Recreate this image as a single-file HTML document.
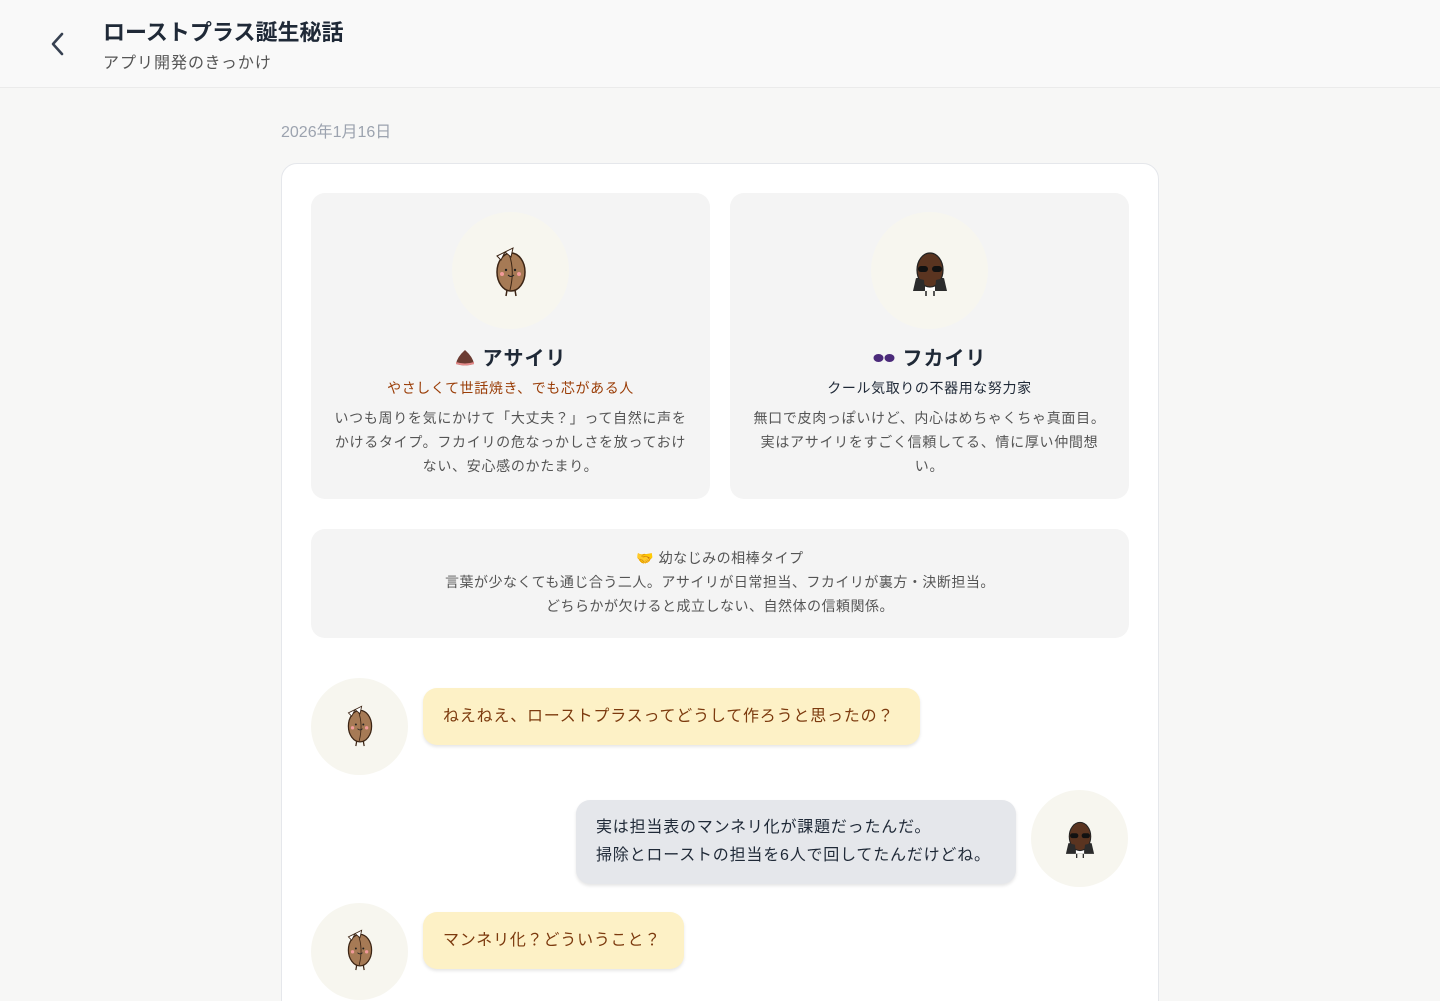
<!DOCTYPE html>
<html><head><meta charset="utf-8"><style>
*{box-sizing:border-box;margin:0;padding:0}
html,body{width:1440px;height:1001px;overflow:hidden}
body{background:#f7f7f6;font-family:"Liberation Sans","Noto Sans CJK JP",sans-serif;position:relative}
.hdr{position:absolute;left:0;top:0;width:1440px;height:88px;background:#f9f9f9;border-bottom:1px solid #ebebeb}
.back{position:absolute;left:48px;top:31px}
.t1{position:absolute;left:103px;top:15px;font-size:22px;font-weight:bold;color:#1f2937}
.t2{position:absolute;left:103px;top:49px;font-size:16px;color:#555;letter-spacing:1px}
.date{position:absolute;left:281px;top:118px;font-size:16px;color:#9ca3af}
.card{position:absolute;left:281px;top:163px;width:878px;height:860px;background:#fff;border:1px solid #e5e7eb;border-radius:16px}
.pc{position:absolute;top:193px;width:399px;height:306px;background:#f4f4f4;border-radius:14px;text-align:center}
.av{position:absolute;border-radius:50%;background:#f7f6ef}
.name{position:absolute;top:149px;left:0;width:100%;font-size:20px;font-weight:bold;color:#1f2937;letter-spacing:1px}
.sub{position:absolute;top:185px;left:0;width:100%;font-size:14px;letter-spacing:.6px}
.desc{position:absolute;top:213px;left:20px;right:20px;font-size:14px;line-height:24px;color:#555;letter-spacing:.7px}
.info{position:absolute;left:311px;top:529px;width:818px;height:109px;background:#f4f4f4;border-radius:14px;text-align:center;font-size:14px;color:#555;line-height:24px;padding-top:17px;letter-spacing:.5px}
.bub{position:absolute;border-radius:14px;font-size:16px;box-shadow:0 2px 3px rgba(0,0,0,.1);letter-spacing:.8px}
.y{background:#fdf1c6;color:#7c3a0e;padding:0 20px;line-height:57px;height:57px}
.g{background:#e5e7eb;color:#1f2937;padding:14px 20px;line-height:28px}
</style></head><body>
<div class="hdr">
<svg class="back" width="20" height="26" viewBox="0 0 20 26"><path d="M14 3 L5 13 L14 23" fill="none" stroke="#374151" stroke-width="2.6" stroke-linecap="round" stroke-linejoin="round"/></svg>
<div class="t1">ローストプラス誕生秘話</div>
<div class="t2">アプリ開発のきっかけ</div>
</div>
<div class="date">2026年1月16日</div>
<div class="card"></div>

<svg width="0" height="0" style="position:absolute"><defs>
<g id="asa"><ellipse cx="0" cy="2" rx="14" ry="19" fill="#a67a55" stroke="#3b2414" stroke-width="1.5"/><path d="M-2 -16 Q4 0 -1 20" fill="none" stroke="#3b2414" stroke-width="1"/><circle cx="-5" cy="0" r="1.2" fill="#222"/><circle cx="4" cy="0" r="1.2" fill="#222"/><path d="M-3 5 Q0 8 3 5" fill="none" stroke="#222" stroke-width="1"/><circle cx="-9" cy="4" r="2" fill="#f19a9a"/><circle cx="8" cy="4" r="2" fill="#f19a9a"/><path d="M-14 -14 L-6 -18 L-10 -10 Z M-6 -18 L2 -22 L0 -13 Z" fill="#fff" stroke="#3b2414" stroke-width="1"/><path d="M-4 20 L-5 26 M4 20 L5 26" stroke="#3b2414" stroke-width="1.5"/></g>
<g id="fuk"><path d="M-13 8 L-16 20 L16 20 L13 8 Z" fill="#2b2b2b"/><rect x="-5" y="10" width="10" height="10" fill="#fff"/><ellipse cx="0" cy="0" rx="13" ry="17" fill="#5a3420" stroke="#222" stroke-width="1.2"/><rect x="-12" y="-4" width="10" height="6" rx="3" fill="#111"/><rect x="2" y="-4" width="10" height="6" rx="3" fill="#111"/><path d="M-14 8 L-17 21 L-5 21 L-6 10 Z M14 8 L17 21 L5 21 L6 10Z" fill="#2b2b2b"/><path d="M-4 21 L-4 26 M4 21 L4 26" stroke="#222" stroke-width="1.5"/></g>
</defs></svg>

<div class="pc" style="left:311px">
<div class="av" style="left:141px;top:19px;width:117px;height:117px"></div>
<svg style="position:absolute;left:170px;top:45px" width="60" height="70" viewBox="-30 -32 60 70"><use href="#asa"/></svg>
<div class="name"><svg width="20" height="18" viewBox="0 0 20 18" style="vertical-align:-2px;margin-right:8px"><path d="M10 1 Q2 8 1 15 Q10 18 19 15 Q18 8 10 1Z" fill="#6b3b32"/><path d="M1 13 Q10 16 19 13 L19 15 Q10 18 1 15Z" fill="#e48a8a"/></svg>アサイリ</div>
<div class="sub" style="color:#9a3d07">やさしくて世話焼き、でも芯がある人</div>
<div class="desc">いつも周りを気にかけて「大丈夫？」って自然に声を<br>かけるタイプ。フカイリの危なっかしさを放っておけ<br>ない、安心感のかたまり。</div>
</div>
<div class="pc" style="left:730px">
<div class="av" style="left:141px;top:19px;width:117px;height:117px"></div>
<svg style="position:absolute;left:170px;top:45px" width="60" height="70" viewBox="-30 -32 60 70"><use href="#fuk"/></svg>
<div class="name"><svg width="22" height="10" viewBox="0 0 22 10" style="vertical-align:2px;margin-right:8px"><ellipse cx="5.5" cy="5" rx="5" ry="4" fill="#4b2a7a"/><ellipse cx="16.5" cy="5" rx="5" ry="4" fill="#4b2a7a"/></svg>フカイリ</div>
<div class="sub" style="color:#1f2937">クール気取りの不器用な努力家</div>
<div class="desc">無口で皮肉っぽいけど、内心はめちゃくちゃ真面目。<br>実はアサイリをすごく信頼してる、情に厚い仲間想<br>い。</div>
</div>

<div class="info">🤝 幼なじみの相棒タイプ<br>言葉が少なくても通じ合う二人。アサイリが日常担当、フカイリが裏方・決断担当。<br>どちらかが欠けると成立しない、自然体の信頼関係。</div>

<div class="av" style="left:311px;top:678px;width:97px;height:97px"></div>
<svg style="position:absolute;left:335px;top:698px" width="50" height="58" viewBox="-30 -32 60 70"><use href="#asa"/></svg>
<div class="bub y" style="left:423px;top:688px;width:497px">ねえねえ、ローストプラスってどうして作ろうと思ったの？</div>

<div class="bub g" style="left:576px;top:800px;width:440px">実は担当表のマンネリ化が課題だったんだ。<br>掃除とローストの担当を6人で回してたんだけどね。</div>
<div class="av" style="left:1031px;top:790px;width:97px;height:97px"></div>
<svg style="position:absolute;left:1055px;top:810px" width="50" height="58" viewBox="-30 -32 60 70"><use href="#fuk"/></svg>

<div class="av" style="left:311px;top:903px;width:97px;height:97px"></div>
<svg style="position:absolute;left:335px;top:922px" width="50" height="58" viewBox="-30 -32 60 70"><use href="#asa"/></svg>
<div class="bub y" style="left:423px;top:912px;width:261px">マンネリ化？どういうこと？</div>
</body></html>
